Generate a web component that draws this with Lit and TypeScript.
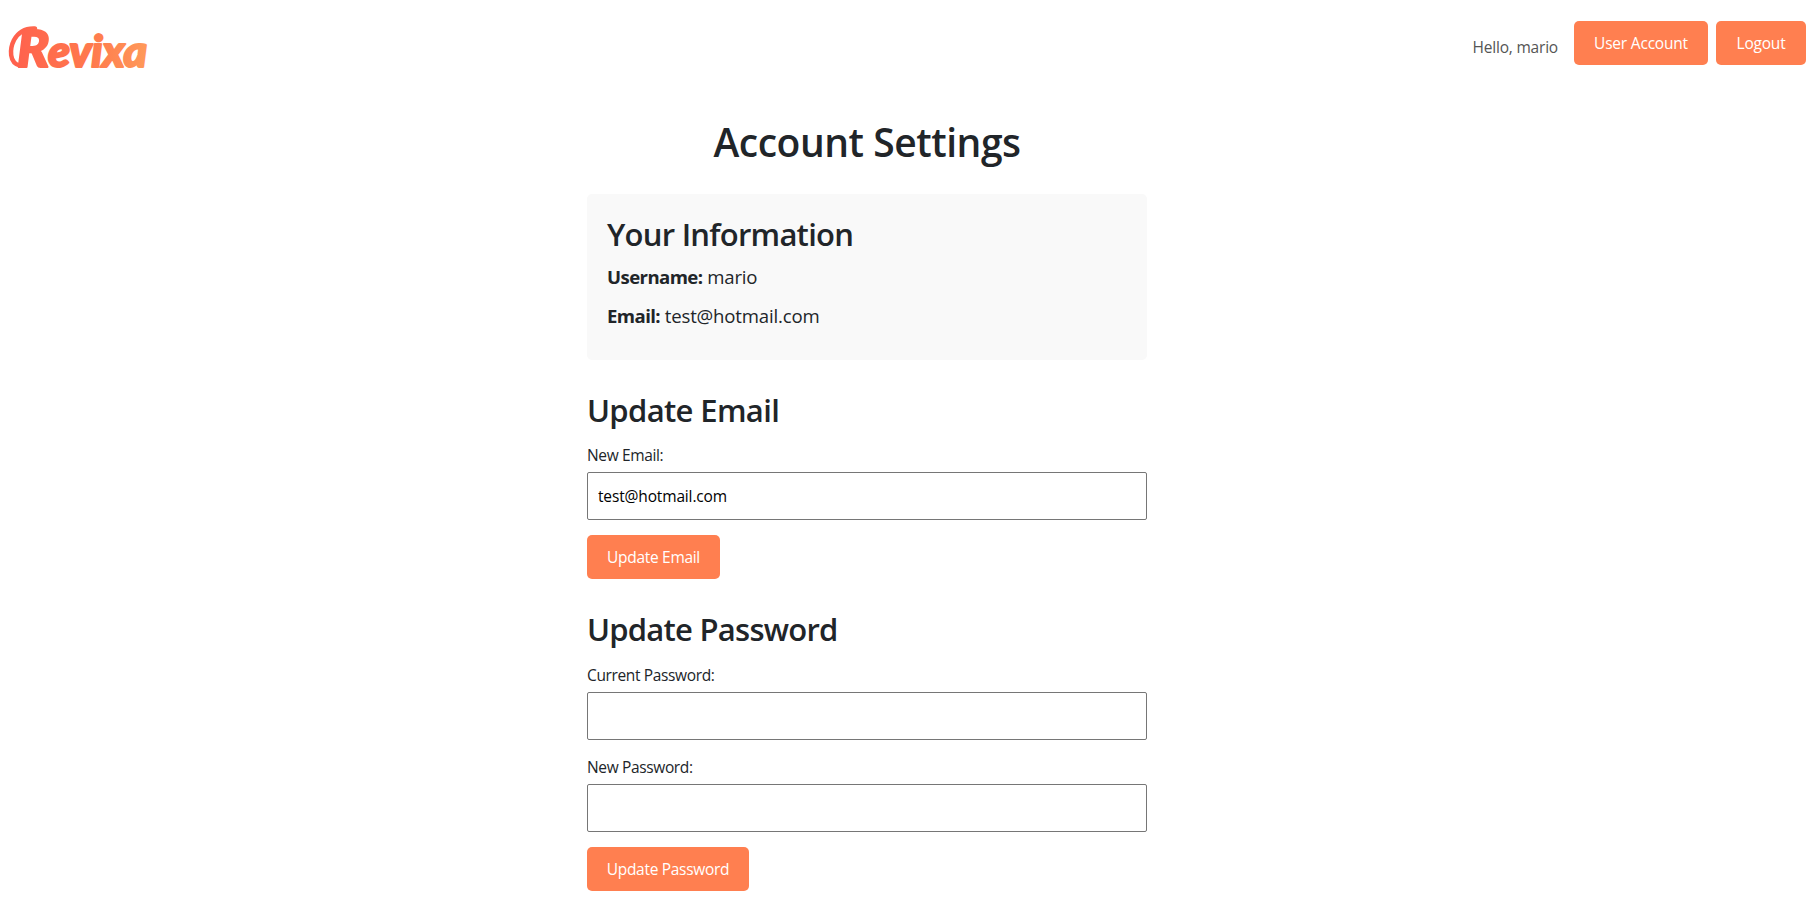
import { LitElement, html, css } from "lit";
import { customElement, property } from "lit/decorators.js";

@customElement("brand-logo")
class BrandLogo extends LitElement {
  static styles = css`
    :host { display: block; width: 170px; height: 80px; }
    svg { display: block; overflow: visible; }
    .word {
      font-family: "Lato", sans-serif;
      font-weight: 900;
      font-style: italic;
      fill: url(#warm);
      stroke: url(#warm);
      stroke-width: 2;
      stroke-linejoin: round;
    }
    .cap { font-size: 51px; }
    .rest { font-size: 44px; }
    .swash { fill: none; stroke: url(#warm); stroke-width: 4.5; stroke-linecap: round; }
  `;
  render() {
    return html`<svg width="170" height="80" viewBox="0 0 170 80" role="img" aria-label="Revixa">
      <defs>
        <linearGradient id="warm" gradientUnits="userSpaceOnUse" x1="8" y1="0" x2="148" y2="0">
          <stop offset="0" stop-color="#ff5f4d" />
          <stop offset="0.6" stop-color="#ff7a4d" />
          <stop offset="1" stop-color="#ff9a5a" />
        </linearGradient>
      </defs>
      <path class="swash" d="M20 65.5 C9 63 9.500 49 14 40 C19 31 26 28 35 28.500" />
      <text class="word cap" x="17" y="67" textLength="32" lengthAdjust="spacingAndGlyphs">R</text>
      <text class="word rest" x="48" y="67" textLength="99" lengthAdjust="spacingAndGlyphs">evixa</text>
    </svg>`;
  }
}

@customElement("field-row")
class FieldRow extends LitElement {
  @property() label = "";
  @property() type = "text";
  @property() value = "";
  static styles = css`
    :host { display: block; margin-bottom: 15px; }
    .label {
      display: block;
      margin-bottom: 5px;
      font-size: 15.5px;
      line-height: 24px;
      letter-spacing: -0.36px;
    }
    .input {
      display: block;
      box-sizing: border-box;
      width: 100%;
      height: 48px;
      padding: 10px;
      border: 1px solid #767676;
      border-radius: 2px;
      background: #fff;
      color: #000;
      font: inherit;
      font-size: 15.5px;
      letter-spacing: -0.15px;
      outline: none;
    }
  `;
  render() {
    return html`<label class="label" for="field">${this.label}</label>
      <input class="input" id="field" type=${this.type} .value=${this.value} />`;
  }
}

@customElement("app-root")
class AppRoot extends LitElement {
  static styles = css`
    :host {
      display: block;
      height: 903px;
      overflow: hidden;
      background: #fff;
      color: #212529;
      font-family: "Open Sans", "Noto Sans", sans-serif;
      font-size: 15.5px;
      line-height: 24px;
      letter-spacing: -0.3px;
    }
    .header {
      display: flex;
      justify-content: space-between;
      align-items: flex-start;
      height: 103px;
      padding: 0 9px 0 0;
      box-sizing: border-box;
    }
    .nav {
      display: flex;
      align-items: flex-start;
      gap: 8px;
      padding-top: 21px;
      letter-spacing: -0.2px;
    }
    .hello { margin: 14px 8px 0 0; color: #555; }
    .btn {
      box-sizing: border-box;
      height: 44px;
      padding: 10px 0;
      border: 0;
      border-radius: 5px;
      background: #ff7f50;
      color: #fff;
      font: inherit;
      line-height: 24px;
      letter-spacing: inherit;
      text-align: center;
    }
    .account { width: 134px; }
    .logout { width: 90px; }
    .update-email { width: 133px; }
    .update-password { width: 162px; }
    .main { width: 560px; margin-left: 587px; padding-top: 15px; }
    .title {
      margin: 0 0 28px;
      font-size: 39px;
      font-weight: 600;
      line-height: 48px;
      letter-spacing: -0.45px;
      text-align: center;
    }
    .subtitle {
      margin: 0 0 14px;
      padding-top: 1px;
      font-size: 31px;
      font-weight: 600;
      line-height: 38px;
      letter-spacing: -0.75px;
    }
    .form .subtitle { letter-spacing: -0.65px; }
    .form .password-title { margin-bottom: 15px; letter-spacing: -0.75px; }
    .card .subtitle { margin-bottom: 9px; }
    .card {
      box-sizing: border-box;
      height: 166px;
      padding: 20px;
      margin-bottom: 30px;
      border-radius: 5px;
      background: #f9f9f9;
    }
    .line { margin: 0 0 10px; font-size: 18.6px; line-height: 29px; letter-spacing: -0.17px; }
    .line strong { letter-spacing: -0.58px; }
    .form { margin-bottom: 30px; }
  `;
  render() {
    return html`
      <header class="header">
        <brand-logo></brand-logo>
        <nav class="nav">
          <span class="hello">Hello, mario</span>
          <button class="btn account">User Account</button>
          <button class="btn logout">Logout</button>
        </nav>
      </header>
      <main class="main">
        <h1 class="title">Account Settings</h1>
        <section class="card">
          <h2 class="subtitle">Your Information</h2>
          <p class="line"><strong>Username:</strong> mario</p>
          <p class="line"><strong>Email:</strong> test@hotmail.com</p>
        </section>
        <section class="form">
          <h2 class="subtitle">Update Email</h2>
          <field-row label="New Email:" type="email" value="test@hotmail.com"></field-row>
          <button class="btn update-email">Update Email</button>
        </section>
        <section class="form">
          <h2 class="subtitle password-title">Update Password</h2>
          <field-row label="Current Password:" type="password"></field-row>
          <field-row label="New Password:" type="password"></field-row>
          <button class="btn update-password">Update Password</button>
        </section>
      </main>
    `;
  }
}
